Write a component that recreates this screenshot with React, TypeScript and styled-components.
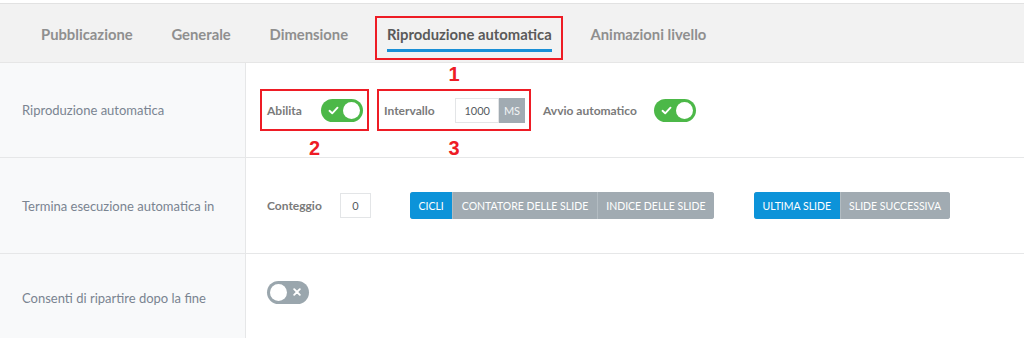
import styled, { createGlobalStyle } from "styled-components"

const GlobalStyle = createGlobalStyle`
    body {
        margin: 0;
        background: #ffffff;
        font-family: Lato, "Open Sans", sans-serif;
    }
`

const tabs = ["Pubblicazione", "Generale", "Dimensione", "Riproduzione automatica", "Animazioni livello"]

function Check() {
    return <svg width="11" height="9" viewBox="0 0 11 9">
        <path d="M1.5 4.8 L4.2 7.3 L9.5 1.7" fill="none" stroke="#fff" strokeWidth="1.9" strokeLinecap="round" strokeLinejoin="round" />
    </svg>
}

function Cross() {
    return <svg width="8" height="8" viewBox="0 0 8 8">
        <path d="M1.2 1.2 L6.8 6.8 M6.8 1.2 L1.2 6.8" stroke="#fff" strokeWidth="1.9" strokeLinecap="round" />
    </svg>
}

function Toggle({ on }: { on: boolean }) {
    return <Switch $on={on}>
        {on ? <Check /> : null}
        <Knob />
        {on ? null : <Cross />}
    </Switch>
}

export default function App() {

    return <>
        <GlobalStyle />
        <Page>
            <TabBar>
                {tabs.map(t =>
                    <Tab key={t} $active={t === "Riproduzione automatica"}>
                        <span>{t}</span>
                    </Tab>
                )}
            </TabBar>

            <Row $height={95}>
                <Label>Riproduzione automatica</Label>
                <Cell>
                    <Marked>
                        <FieldLabel $width={54}>Abilita</FieldLabel>
                        <Toggle on />
                        <Badge $place="below">2</Badge>
                    </Marked>
                    <Marked $gap={8}>
                        <FieldLabel $width={71}>Intervallo</FieldLabel>
                        <NumberBox $width={44}>1000</NumberBox>
                        <Unit>MS</Unit>
                        <Badge $place="above">1</Badge>
                        <Badge $place="below">3</Badge>
                    </Marked>
                    <Plain $gap={12}>
                        <FieldLabel $width={111}>Avvio automatico</FieldLabel>
                        <Toggle on />
                    </Plain>
                </Cell>
            </Row>

            <Row $height={96}>
                <Label>Termina esecuzione automatica in</Label>
                <Cell>
                    <Plain $gap={7}>
                        <FieldLabel $width={73}>Conteggio</FieldLabel>
                        <NumberBox $width={31} $center>0</NumberBox>
                    </Plain>
                    <Segmented $gap={39}>
                        <Segment $active>CICLI</Segment>
                        <Segment>CONTATORE DELLE SLIDE</Segment>
                        <Segment>INDICE DELLE SLIDE</Segment>
                    </Segmented>
                    <Segmented $gap={40}>
                        <Segment $active>ULTIMA SLIDE</Segment>
                        <Segment>SLIDE SUCCESSIVA</Segment>
                    </Segmented>
                </Cell>
            </Row>

            <Row $height={84} $last>
                <Label $shift={2}>Consenti di ripartire dopo la fine</Label>
                <Cell>
                    <Plain $gap={7} $shift={-4}>
                        <Toggle on={false} />
                    </Plain>
                </Cell>
            </Row>
        </Page>
    </>
}

const Page = styled.div`
    width: 1024px;
    height: 338px;
    overflow: hidden;
    padding-top: 3px;
    box-sizing: border-box;
`

const TabBar = styled.div`
    display: flex;
    align-items: stretch;
    gap: 38.8px;
    height: 58px;
    padding-left: 41px;
    background: #f2f2f2;
    border-top: 1px solid #e2e2e2;
    border-bottom: 1px solid #e6e6e6;
`

const Tab = styled.div<{ $active?: boolean }>`
    position: relative;
    display: flex;
    align-items: center;
    font-size: 14.8px;
    font-weight: 700;
    color: ${p => p.$active ? "#5a5a5a" : "#8f8f8f"};

    & > span {
        position: relative;
        padding-top: 1px;
    }

    & > span::after {
        content: "";
        display: ${p => p.$active ? "block" : "none"};
        position: absolute;
        left: 0;
        right: 0;
        bottom: -9px;
        height: 3px;
        background: #1a8fd6;
    }

    &::before {
        content: "";
        display: ${p => p.$active ? "block" : "none"};
        position: absolute;
        left: -12px;
        right: -11px;
        top: 12px;
        bottom: 2px;
        border: 2px solid #ee1c25;
    }
`

const Row = styled.div<{ $height: number; $last?: boolean }>`
    display: grid;
    grid-template-columns: 246px 1fr;
    height: ${p => p.$height}px;
    border-bottom: ${p => p.$last ? "none" : "1px solid #e6e7e8"};
    box-sizing: border-box;
`

const Label = styled.div<{ $shift?: number }>`
    display: flex;
    align-items: center;
    padding-left: 22px;
    padding-top: ${p => (p.$shift ?? 0) * 2}px;
    background: #f8f9fa;
    border-right: 1px solid #e6e7e8;
    font-size: 13px;
    color: #7a8491;
`

const Cell = styled.div`
    display: flex;
    align-items: center;
    padding-left: 14px;
`

const Marked = styled.div<{ $gap?: number }>`
    position: relative;
    display: flex;
    align-items: center;
    height: 42px;
    box-sizing: border-box;
    margin-left: ${p => p.$gap ?? 0}px;
    padding: 0 4px 0 5px;
    border: 2px solid #ee1c25;
`

const Plain = styled.div<{ $gap?: number; $shift?: number }>`
    display: flex;
    align-items: center;
    margin-left: ${p => p.$gap ?? 0}px;
    margin-top: ${p => (p.$shift ?? 0) * 2}px;
`

const Badge = styled.div<{ $place: "above" | "below" }>`
    position: absolute;
    left: 50%;
    transform: translateX(-50%);
    ${p => p.$place === "above" ? "top: -27px;" : "bottom: -29px;"}
    font-family: "Liberation Sans", Arial, sans-serif;
    font-size: 20px;
    font-weight: 700;
    line-height: 20px;
    color: #ee1c25;
`

const FieldLabel = styled.div<{ $width: number }>`
    width: ${p => p.$width}px;
    font-size: 12px;
    font-weight: 700;
    color: #7a7a7a;
`

const Switch = styled.div<{ $on: boolean }>`
    display: flex;
    align-items: center;
    justify-content: space-between;
    width: 42px;
    height: 23px;
    box-sizing: border-box;
    padding: 0 3px 0 ${p => p.$on ? 7 : 3}px;
    padding-right: ${p => p.$on ? 3 : 8}px;
    border-radius: 12px;
    background: ${p => p.$on ? "#4cb848" : "#9aa6ad"};
`

const Knob = styled.div`
    width: 17px;
    height: 17px;
    border-radius: 50%;
    background: #ffffff;
`

const NumberBox = styled.div<{ $width: number; $center?: boolean }>`
    display: flex;
    align-items: center;
    justify-content: ${p => p.$center ? "center" : "flex-end"};
    width: ${p => p.$width}px;
    height: 25px;
    box-sizing: border-box;
    padding-right: ${p => p.$center ? 0 : 8}px;
    border: 1px solid #e3e5e7;
    background: #ffffff;
    font-size: 11px;
    color: #555b61;
`

const Unit = styled.div`
    display: flex;
    align-items: center;
    justify-content: center;
    width: 26px;
    height: 25px;
    background: #a1abb2;
    font-size: 11px;
    color: #f2f4f5;
`

const Segmented = styled.div<{ $gap: number }>`
    display: flex;
    margin-left: ${p => p.$gap}px;
    height: 27px;
    border-radius: 3px;
    overflow: hidden;
    background: #a1abb2;
`

const Segment = styled.div<{ $active?: boolean }>`
    display: flex;
    align-items: center;
    padding: 0 8.5px;
    font-size: 10.5px;
    color: #ffffff;
    background: ${p => p.$active ? "#0c93d9" : "#a1abb2"};

    & + & {
        border-left: 1px solid #b3bcc2;
    }
`
